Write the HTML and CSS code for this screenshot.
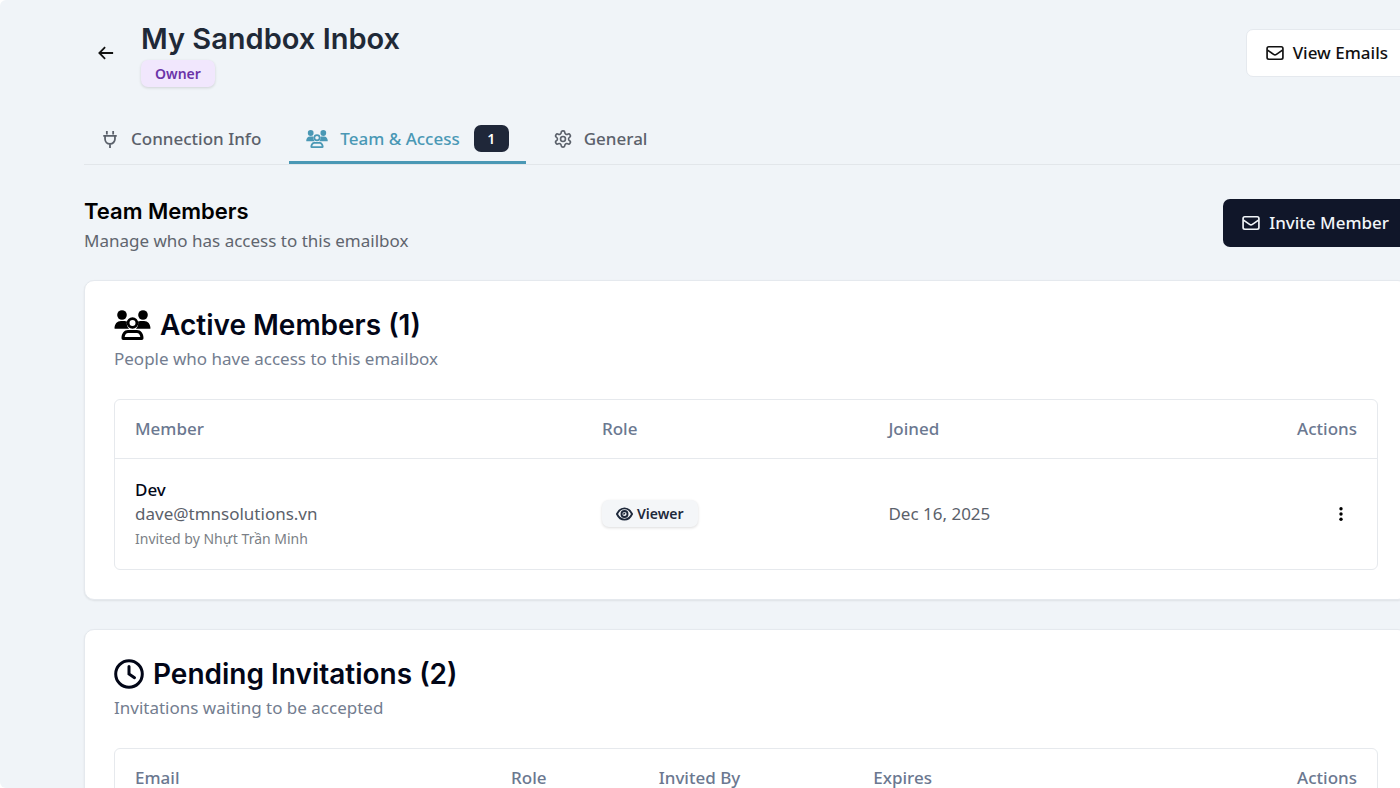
FILE: index.html
```html
<!DOCTYPE html>
<html lang="en">
<head>
  <meta charset="UTF-8" />
  <meta name="viewport" content="width=device-width, initial-scale=1.0"/>
  <title>My Sandbox Inbox</title>
  <link rel="stylesheet" href="styles.css">
</head>
<body>

  <svg class="sprite" aria-hidden="true">
    <symbol id="mail" viewBox="0 0 24 24">
      <rect x="2.500" y="4.500" width="19" height="15" rx="2" />
      <path d="M3 8.500l7.300 5.200a3 3 0 0 0 3.400 0L21 8.500" />
    </symbol>
    <symbol id="team" viewBox="0 0 36 30">
      <circle cx="7.5" cy="5" r="4.8" />
      <circle cx="28.5" cy="5" r="4.8" />
      <path d="M0 18.500c0-4.400 2.600-7.500 6.500-7.500h3.500c1 0 1.800.2 2.500.6-.7 2.900.2 5.300 2.100 7.100H.5zM36 18.500c0-4.400-2.600-7.500-6.500-7.500H26c-1 0-1.800.2-2.500.6.7 2.900-.2 5.300-2.100 7.100h14.100z" />
      <path fill-rule="evenodd" d="M18 7.200a5.800 5.800 0 1 1 0 11.600a5.800 5.800 0 0 1 0-11.600zM18 10a3 3 0 1 0 0 6a3 3 0 0 0 0-6z" />
      <path fill-rule="evenodd" d="M13.500 20h9c3.700 0 6.500 3.500 6.500 8 0 1.200-.6 2-1.800 2H8.800C7.600 30 7 29.200 7 28c0-4.500 2.800-8 6.500-8zM13.600 23c-1.800 0-3 1.600-3.400 4h15.600c-.4-2.400-1.600-4-3.400-4z" />
    </symbol>
  </svg>

  <div class="page">
    <main>
      <header>
        <button class="back" aria-label="Back">
          <svg viewBox="0 0 18 18"><path d="M17 9H2M8 2.500L1.500 9 8 15.500" /></svg>
        </button>
        <div class="heading">
          <h1>My Sandbox Inbox</h1>
          <span class="badge owner">Owner</span>
        </div>
        <button class="btn light"><svg><use href="#mail" /></svg>View Emails</button>
      </header>

      <nav>
        <a href="#connection">
          <svg class="line" viewBox="0 0 20 20"><path d="M6.500 1v4M13.500 1v4M2.500 6.500h15M4.500 6.500V10a5.500 5.500 0 0 0 11 0V6.500M10 15.500V20" /></svg>
          Connection Info
        </a>
        <a href="#team-access" class="active">
          <svg class="solid"><use href="#team" /></svg>
          Team &amp; Access
          <span class="count">1</span>
        </a>
        <a href="#general">
          <svg class="line" viewBox="1 1 22 22"><path d="M12.220 2h-.440a2 2 0 0 0-2 2v.180a2 2 0 0 1-1 1.730l-.430.250a2 2 0 0 1-2 0l-.150-.080a2 2 0 0 0-2.730.730l-.220.380a2 2 0 0 0 .730 2.730l.150.100a2 2 0 0 1 1 1.720v.510a2 2 0 0 1-1 1.740l-.150.090a2 2 0 0 0-.730 2.730l.220.380a2 2 0 0 0 2.730.730l.150-.080a2 2 0 0 1 2 0l.430.250a2 2 0 0 1 1 1.730V20a2 2 0 0 0 2 2h.440a2 2 0 0 0 2-2v-.180a2 2 0 0 1 1-1.730l.430-.250a2 2 0 0 1 2 0l.150.080a2 2 0 0 0 2.730-.730l.220-.390a2 2 0 0 0-.730-2.730l-.150-.080a2 2 0 0 1-1-1.740v-.500a2 2 0 0 1 1-1.740l.150-.090a2 2 0 0 0 .730-2.730l-.220-.380a2 2 0 0 0-2.730-.730l-.150.080a2 2 0 0 1-2 0l-.430-.250a2 2 0 0 1-1-1.730V4a2 2 0 0 0-2-2z" /><circle cx="12" cy="12" r="3" /></svg>
          General
        </a>
      </nav>

      <section class="intro">
        <div>
          <h2>Team Members</h2>
          <p>Manage who has access to this emailbox</p>
        </div>
        <button class="btn dark"><svg><use href="#mail" /></svg>Invite Member</button>
      </section>

      <section class="card">
        <h3><svg class="team-icon"><use href="#team" /></svg>Active Members (1)</h3>
        <p class="desc">People who have access to this emailbox</p>
        <div class="table-box">
          <table class="members">
            <thead>
              <tr><th>Member</th><th>Role</th><th>Joined</th><th class="right">Actions</th></tr>
            </thead>
            <tbody>
              <tr>
                <td>
                  <div class="name">Dev</div>
                  <div class="email">dave@tmnsolutions.vn</div>
                  <div class="invited">Invited by Nhựt Trần Minh</div>
                </td>
                <td>
                  <span class="badge viewer">
                    <svg viewBox="0 0 18 14"><path d="M1 7c1.800-3.800 4.600-6 8-6s6.200 2.200 8 6c-1.800 3.800-4.600 6-8 6S2.800 10.800 1 7z" /><circle cx="9" cy="7" r="3.200" /><path d="M9 5.800A1.200 1.200 0 0 1 7.800 7" /></svg>
                    Viewer
                  </span>
                </td>
                <td class="date">Dec 16, 2025</td>
                <td class="right">
                  <button class="more" aria-label="Actions">
                    <svg viewBox="0 0 4 16"><circle cx="2" cy="2.800" r="1.700" /><circle cx="2" cy="8" r="1.700" /><circle cx="2" cy="13.200" r="1.700" /></svg>
                  </button>
                </td>
              </tr>
            </tbody>
          </table>
        </div>
      </section>

      <section class="card">
        <h3><svg class="clock-icon" viewBox="0 0 30 30"><circle cx="15" cy="15" r="13.300" /><path d="M15 7.500V15l5.500 3.700" /></svg>Pending Invitations (2)</h3>
        <p class="desc">Invitations waiting to be accepted</p>
        <div class="table-box">
          <table class="pending">
            <thead>
              <tr><th>Email</th><th>Role</th><th>Invited By</th><th>Expires</th><th class="right">Actions</th></tr>
            </thead>
          </table>
        </div>
      </section>
    </main>
  </div>

</body>
</html>
```

FILE: styles.css
```css
* {
  box-sizing: border-box;
}
body {
  margin: 0;
  background: white;
  font-family: 'Noto Sans', sans-serif;
  font-size: 17px;
  line-height: 24px;
  color: #020617;
}
h1, h2, h3, p {
  margin: 0;
}
h1, h2, h3 {
  font-family: Inter, sans-serif;
  font-weight: 600;
}
button {
  font: inherit;
  color: inherit;
  cursor: pointer;
}
svg {
  flex: none;
}
.sprite {
  position: absolute;
  width: 0;
  height: 0;
}
.page {
  height: 100vh;
  overflow: hidden;
  background: #f0f4f8;
  border-radius: 6px 0 0 6px;
}
main {
  margin: 0 -8px 0 84px;
  padding-top: 19px;
}

/* header */
header {
  display: flex;
  align-items: center;
}
.back {
  display: flex;
  padding: 14px;
  margin-right: 13px;
  border: none;
  background: none;
}
.back svg {
  width: 16px;
  height: 16px;
  fill: none;
  stroke: #111;
  stroke-width: 2;
}
.heading {
  flex: 1;
}
h1 {
  font-size: 29px;
  line-height: 40px;
  color: #1f2937;
}
.badge {
  display: inline-flex;
  align-items: center;
  gap: 4px;
  height: 27px;
  padding: 0 14px;
  border-radius: 7px;
  font-size: 14px;
  font-weight: 600;
  box-shadow: 0 1px 3px rgba(0, 0, 0, 0.14);
}
.owner {
  margin-top: 1px;
  background: #f1e7fd;
  color: #6b34a8;
}
.btn {
  display: flex;
  align-items: center;
  gap: 8px;
  height: 48px;
  padding: 0 19px 0 18px;
  border-radius: 7px;
  font-weight: 500;
}
.btn svg {
  width: 20px;
  height: 20px;
  fill: none;
  stroke: currentColor;
  stroke-width: 2;
}
.light {
  border: 1px solid #e5e9ee;
  background: white;
  color: #111;
}
.dark {
  border: none;
  background: #101629;
  color: #f1f5f9;
}

/* tabs */
nav {
  display: flex;
  margin-top: 25px;
  border-bottom: 1px solid #e2e6ea;
}
nav a {
  display: flex;
  align-items: center;
  gap: 12px;
  height: 52px;
  padding: 4px 17px 0;
  margin-right: 11px;
  border-bottom: 3px solid transparent;
  color: #5b616b;
  font-weight: 500;
  text-decoration: none;
}
nav .active {
  border-color: #4a98b5;
  color: #4a98b5;
}
.line {
  width: 18px;
  height: 18px;
  fill: none;
  stroke: currentColor;
  stroke-width: 2;
}
.solid {
  width: 22px;
  height: 18px;
  fill: currentColor;
}
.count {
  width: 35px;
  margin-left: 2px;
  border-radius: 7px;
  background: #1f2739;
  color: white;
  font-size: 14px;
  font-weight: 600;
  line-height: 27px;
  text-align: center;
}

/* team members */
.intro {
  display: flex;
  align-items: center;
  justify-content: space-between;
  margin: 28px 0 27px;
}
h2 {
  font-size: 22px;
  line-height: 36px;
  color: #000;
}
.intro p {
  color: #60656e;
}
.card {
  margin-bottom: 29px;
  padding: 29px;
  border: 1px solid #e5e9ee;
  border-radius: 10px;
  background: white;
  box-shadow: 0 1px 2px rgba(0, 0, 0, 0.08);
}
h3 {
  display: flex;
  align-items: center;
  gap: 9px;
  font-size: 28px;
  line-height: 30px;
}
.team-icon {
  width: 37px;
  height: 30px;
}
.clock-icon {
  width: 30px;
  height: 30px;
  fill: none;
  stroke: currentColor;
  stroke-width: 3;
  stroke-linecap: round;
}
.desc {
  margin: 7px 0 28px;
  color: #737d8f;
}
.table-box {
  border: 1px solid #e6e9ed;
  border-radius: 6px;
}
table {
  width: 100%;
  table-layout: fixed;
  border-collapse: collapse;
}
th {
  height: 58px;
  padding: 0 20px;
  color: #6b7890;
  font-weight: 500;
  text-align: left;
}
td {
  padding: 19px 20px;
  border-top: 1px solid #e6e9ed;
}
.right {
  text-align: right;
}
.members th:nth-child(1) { width: 37%; }
.members th:nth-child(2) { width: 22.7%; }
.pending th:nth-child(1) { width: 29.8%; }
.pending th:nth-child(2) { width: 11.7%; }
.pending th:nth-child(3) { width: 17%; }
.pending th:nth-child(4) { width: 21%; }
.name {
  font-weight: 500;
}
.email, .date {
  color: #5b616b;
}
.invited {
  padding-top: 2px;
  color: #7b7f86;
  font-size: 14px;
  line-height: 22px;
}
.viewer {
  background: #f4f6f8;
  color: #1e293b;
}
.viewer svg {
  width: 17px;
  height: 14px;
  fill: none;
  stroke: currentColor;
  stroke-width: 2;
}
.more {
  padding: 8px 14px;
  border: none;
  background: none;
}
.more svg {
  display: block;
  width: 4px;
  height: 16px;
}
```
